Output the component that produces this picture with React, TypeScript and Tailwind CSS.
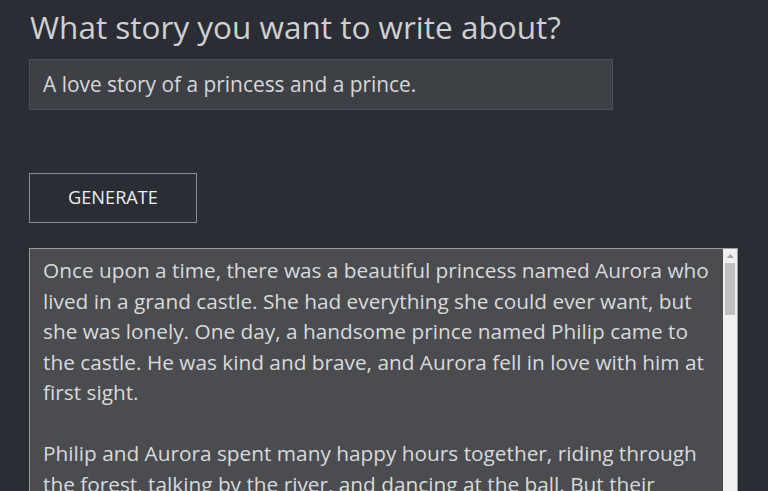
import React from "react";

const lines = [
  "Once upon a time, there was a beautiful princess named Aurora who",
  "lived in a grand castle. She had everything she could ever want, but",
  "she was lonely. One day, a handsome prince named Philip came to",
  "the castle. He was kind and brave, and Aurora fell in love with him at",
  "first sight.",
  "\u00a0",
  "Philip and Aurora spent many happy hours together, riding through",
  "the forest, talking by the river, and dancing at the ball. But their",
];

export default function App() {
  return (
    <div
      className="w-[768px] h-[491px] overflow-hidden bg-[#2a2d33] pl-[29px]"
      style={{ fontFamily: '"Open Sans", "Noto Sans", sans-serif' }}
    >
      <h1 className="pt-[5px] text-[31.5px] leading-[44px] text-[#cfd0d2] pl-[1px]">
        What story you want to write about?
      </h1>
      <div className="mt-[10px] w-[584px] h-[51px] bg-[#3d4146] border border-[#4b4f56] flex items-center pl-[13px] text-[20.9px] text-[#d6d7d8]">
        A love story of a princess and a prince.
      </div>
      <button className="mt-[63px] w-[168px] h-[50px] border border-[#8b8d91] text-[18.2px] text-[#eeeeee] flex items-center justify-center">
        GENERATE
      </button>
      <div className="mt-[25px] w-[709px] h-[260px] bg-[#4a4c50] border border-[#9c9d9f] flex">
        <div className="flex-1 pl-[13px] pt-[6px] text-[20.8px] leading-[30.5px] text-[#d9dadb]">
          {lines.map((l, i) => (
            <div key={i} className="whitespace-nowrap">
              {l}
            </div>
          ))}
        </div>
        <div className="w-[14px] bg-[#f0f0f0] flex flex-col items-center">
          <div className="h-[14px] w-full flex items-center justify-center">
            <svg width="7" height="4" viewBox="0 0 7 4">
              <path d="M0 4 L3.5 0 L7 4 Z" fill="#a3a3a3" />
            </svg>
          </div>
          <div className="w-[10px] h-[52px] bg-[#c1c1c1]" />
        </div>
      </div>
    </div>
  );
}
